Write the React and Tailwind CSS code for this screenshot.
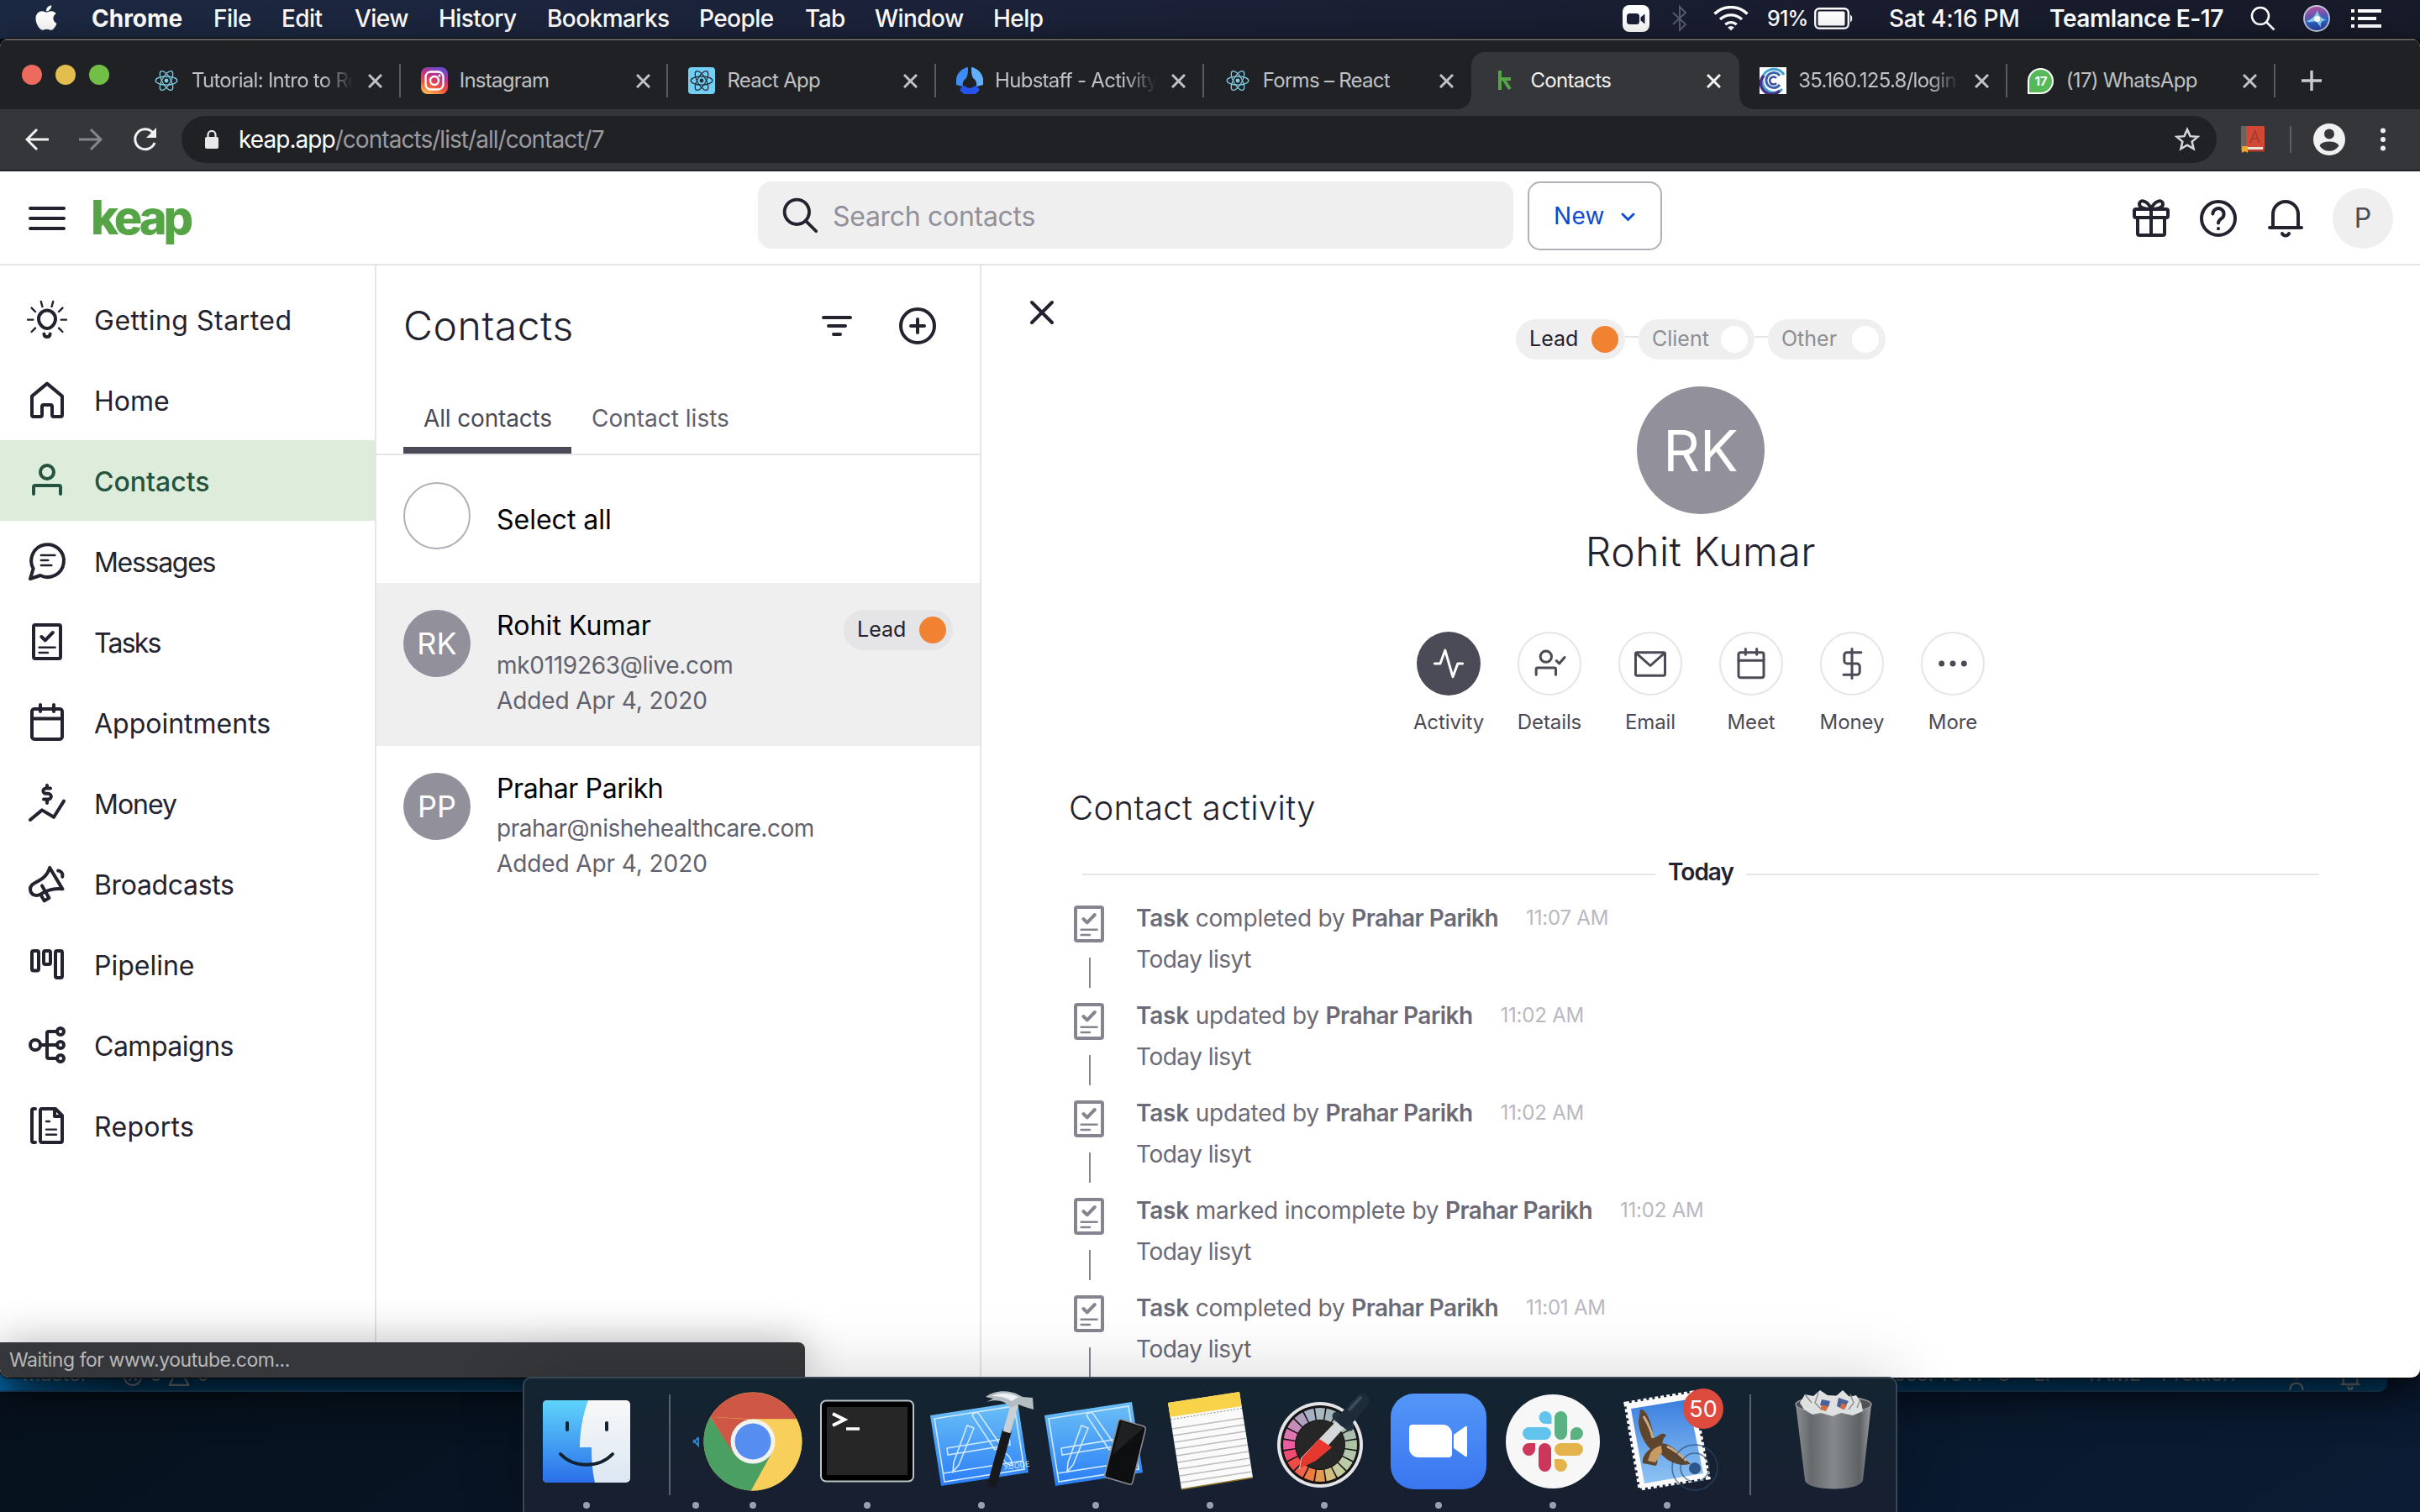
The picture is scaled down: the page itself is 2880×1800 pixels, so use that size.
import React from "react";
import { FaApple } from "react-icons/fa";

/* ---------- shared helpers ---------- */

function Ico({ size = 48, sw = 2, className = "", children }) {
  return (
    <svg
      width={size}
      height={size}
      viewBox="0 0 24 24"
      fill="none"
      stroke="currentColor"
      strokeWidth={sw}
      strokeLinecap="round"
      strokeLinejoin="round"
      className={"shrink-0 " + className}
    >
      {children}
    </svg>
  );
}

function ReactLogo({ color, size = 28 }) {
  return (
    <svg width={size} height={size} viewBox="-12 -12 24 24" fill="none" stroke={color} strokeWidth="1.1">
      <circle r="2.1" fill={color} stroke="none" />
      <ellipse rx="11" ry="4.3" />
      <ellipse rx="11" ry="4.3" transform="rotate(60)" />
      <ellipse rx="11" ry="4.3" transform="rotate(120)" />
    </svg>
  );
}

/* ---------- macOS menu bar ---------- */

const MENUS = [
  ["File", "w-[81px]"],
  ["Edit", "w-[87px]"],
  ["View", "w-[100px]"],
  ["History", "w-[129px]"],
  ["Bookmarks", "w-[181px]"],
  ["People", "w-[126px]"],
  ["Tab", "w-[83px]"],
  ["Window", "w-[141px]"],
  ["Help", "w-[80px]"],
];

function MenuBar() {
  return (
    <header className="flex h-[46px] items-center bg-gradient-to-r from-[#1c2942] via-[#1b2036] to-[#171a28] pb-[2px] text-[28px] font-medium leading-[44px] text-white">
      <div className="flex w-[109px] justify-start pl-[38px]">
        <FaApple size={34} className="mb-[3px]" />
      </div>
      <span className="w-[145px] font-bold">Chrome</span>
      {MENUS.map(([label, w]) => (
        <span key={label} className={"whitespace-nowrap tracking-[-0.02em] " + w}>
          {label}
        </span>
      ))}
      <div className="ml-auto flex items-center pr-[46px]">
        <svg width="32" height="32" viewBox="0 0 32 32" className="mr-[26px]">
          <rect width="32" height="32" rx="8" fill="#fff" />
          <rect x="5" y="10" width="15" height="13" rx="3.5" fill="#1b2036" />
          <path d="M21.500 14.500 26.500 10.500v12l-5-4z" fill="#1b2036" />
        </svg>
        <svg width="20" height="32" viewBox="0 0 20 32" fill="none" stroke="#565c6c" strokeWidth="2" className="mr-[30px]">
          <path d="M2 9 17 23 10 30V2l7 7L2 23" />
        </svg>
        <svg width="42" height="30" viewBox="0 0 42 30" fill="none" stroke="#fff" strokeWidth="3.400" className="mr-[22px]">
          <path d="M1.500 9.500a28 28 0 0 1 39 0M8 16a19 19 0 0 1 26 0M14.300 22.200a10 10 0 0 1 13.400 0" />
          <path d="m17 25.500 4 4 4-4a6 6 0 0 0-8 0z" fill="#fff" stroke="none" />
        </svg>
        <span className="w-[56px] text-[25px] tracking-[-0.03em]">91%</span>
        <svg width="48" height="26" viewBox="0 0 48 26" className="mr-[41px]">
          <rect x="1.200" y="1.200" width="39.600" height="23.600" rx="5" fill="none" stroke="#fff" strokeWidth="2.400" />
          <rect x="4.500" y="4.500" width="32" height="17" rx="1.500" fill="#fff" />
          <path d="M43 8.500c3 1 3 8 0 9z" fill="#fff" />
        </svg>
        <span className="w-[191px] whitespace-nowrap tracking-[-0.008em]">Sat 4:16 PM</span>
        <span className="w-[239px] whitespace-nowrap font-semibold tracking-[-0.015em]">Teamlance E-17</span>
        <svg width="30" height="30" viewBox="0 0 30 30" fill="none" stroke="#fff" strokeWidth="2.600" className="mr-[33px]">
          <circle cx="12" cy="12" r="10" />
          <path d="m19.500 19.500 9 9" />
        </svg>
        <svg width="32" height="32" viewBox="-16 -16 32 32" className="mr-[25px]">
          <defs>
            <linearGradient id="siri" x1="0.300" y1="0" x2="0.500" y2="1">
              <stop offset="0" stopColor="#c0529c" />
              <stop offset="0.400" stopColor="#6a55b5" />
              <stop offset="0.600" stopColor="#2f66c5" />
              <stop offset="1" stopColor="#2a3f9c" />
            </linearGradient>
          </defs>
          <circle r="15" fill="url(#siri)" stroke="#c4c8dc" strokeWidth="1.800" />
          <path d="M-12 3C-6 1-2-2 1-10c1 7 5 10 11 12C6 2 4 5 5 11 2 6 0 4-1 3-4 3-8 6-12 3z" fill="#8fe0f2" opacity=".9" />
          <circle cx=".5" cy=".5" r="3.500" fill="#fff" />
        </svg>
        <svg width="36" height="22" viewBox="0 0 36 22" fill="#fff">
          <path d="M0 0h4v4H0zM8 0h28v4H8zM0 9h4v4H0zM8 9h22v4H8zM0 18h4v4H0zM8 18h28v4H8z" />
        </svg>
      </div>
    </header>
  );
}

/* ---------- browser chrome ---------- */

function HubstaffIcon() {
  return (
    <svg width="34" height="34" viewBox="0 0 34 34">
      <path d="M15 1C8 2 2 8 1 15v7l8 2c-1-5 1-8 4-10 2-4 2-8 2-13z" fill="#3f8cf5" />
      <path d="M19 1c7 1 13 7 14 14v7l-8 2c1-5-1-8-4-10-2-4-2-8-2-13z" fill="#62b0fb" />
      <path d="M9 23c3 0 5 3 8 3s5-3 8-3l4 5-5 5H10l-5-5z" fill="#2453ee" />
    </svg>
  );
}

function InstagramIcon() {
  return (
    <svg width="32" height="32" viewBox="0 0 32 32">
      <defs>
        <linearGradient id="ig" x1="0.200" y1="1" x2="0.600" y2="0">
          <stop offset="0" stopColor="#fdc04f" />
          <stop offset="0.350" stopColor="#f0503c" />
          <stop offset="0.650" stopColor="#c9317f" />
          <stop offset="1" stopColor="#6a4bd0" />
        </linearGradient>
      </defs>
      <rect width="32" height="32" rx="8" fill="url(#ig)" />
      <g fill="none" stroke="#fff" strokeWidth="2.400">
        <rect x="5.500" y="5.500" width="21" height="21" rx="6" />
        <circle cx="16" cy="16" r="5" />
      </g>
      <circle cx="22" cy="10" r="1.500" fill="#fff" />
    </svg>
  );
}

function ReactAppIcon() {
  return (
    <span className="flex size-[32px] items-center justify-center rounded-[4px] bg-[#74cff5]">
      <ReactLogo color="#22303c" size={28} />
    </span>
  );
}

function KeapIcon() {
  return (
    <svg width="32" height="32" viewBox="0 0 32 32" fill="none" stroke="#55a546" strokeWidth="4">
      <path d="M10 4v23M10 14h13M14 14l8 12" />
    </svg>
  );
}

function SwirlIcon() {
  return (
    <svg width="32" height="32" viewBox="0 0 32 32" fill="none">
      <rect width="32" height="32" fill="#fff" />
      <path d="M27 26A14 14 0 1 1 29 9" stroke="#3da3d4" strokeWidth="3" />
      <path d="M24 28A13 13 0 0 1 5 10" stroke="#4a2f86" strokeWidth="3.500" />
      <path d="M24 21A9 9 0 1 1 24 10" stroke="#3c63b0" strokeWidth="3" />
      <path d="M20 19a4.500 4.500 0 1 1 0-6" stroke="#3a4aa0" strokeWidth="2.500" />
    </svg>
  );
}

function WhatsIcon() {
  return (
    <span className="flex size-[31px] items-center justify-center rounded-full rounded-bl-[8px] border-[2px] border-white bg-[#54b956] text-[15px] font-bold leading-none tracking-tight text-white">
      17
    </span>
  );
}

const TABS = [
  { icon: <ReactLogo color="#7fcbe0" />, title: "Tutorial: Intro to React", fade: true, sep: true },
  { icon: <InstagramIcon />, title: "Instagram", sep: true },
  { icon: <ReactAppIcon />, title: "React App", sep: true },
  { icon: <HubstaffIcon />, title: "Hubstaff - Activity", fade: true, sep: true },
  { icon: <ReactLogo color="#7fcbe0" />, title: "Forms – React" },
  { icon: <KeapIcon />, title: "Contacts", active: true },
  { icon: <SwirlIcon />, title: "35.160.125.8/login", fade: true, sep: true },
  { icon: <WhatsIcon />, title: "(17) WhatsApp", sep: true },
];

function Tab({ icon, title, fade, sep, active }) {
  return (
    <div
      className={
        "relative flex h-[68px] w-[318.7px] shrink-0 items-center pl-[22px] text-[24px] " +
        (active ? "rounded-t-[16px] bg-[#35363a] text-[#f1f1f2]" : "text-[#bfc1c4]")
      }
    >
      {active && (
        <>
          <span className="absolute bottom-0 left-[-16px] size-[16px] bg-[radial-gradient(circle_at_0_0,transparent_15.5px,#35363a_16px)]" />
          <span className="absolute bottom-0 right-[-16px] size-[16px] bg-[radial-gradient(circle_at_100%_0,transparent_15.5px,#35363a_16px)]" />
        </>
      )}
      <span className="flex w-[36px] justify-center">{icon}</span>
      <span
        className={
          "ml-[12px] w-[194px] overflow-hidden whitespace-nowrap tracking-[-0.03em] " +
          (fade ? "[mask-image:linear-gradient(90deg,#000_80%,transparent_99%)]" : "")
        }
      >
        {title}
      </span>
      <svg width="17" height="17" viewBox="0 0 17 17" stroke="currentColor" strokeWidth="3" className="ml-[16px]">
        <path d="m1 1 15 15M16 1 1 16" />
      </svg>
      {sep && <span className="ml-auto h-[40px] w-[2px] bg-[#5a5b5e]" />}
    </div>
  );
}

function TabStrip() {
  return (
    <div className="flex h-[84px] items-end border-t-[2px] border-[#5f605f] bg-[#202124]">
      <div className="flex h-[68px] w-[158px] items-center gap-[16px] pb-[14px] pl-[26px]">
        <span className="size-[24px] rounded-full bg-[#ed6a5e]" />
        <span className="size-[24px] rounded-full bg-[#e1be4d]" />
        <span className="size-[24px] rounded-full bg-[#71bf46]" />
      </div>
      {TABS.map((t) => (
        <Tab key={t.title} {...t} />
      ))}
      <div className="flex h-[68px] w-[86px] items-center justify-center">
        <svg width="24" height="24" viewBox="0 0 24 24" stroke="#c9cacc" strokeWidth="3.400">
          <path d="M12 0v24M0 12h24" />
        </svg>
      </div>
    </div>
  );
}

function Toolbar() {
  return (
    <div className="flex h-[74px] items-center border-b-[2px] border-[#232427] bg-[#35363a]">
      <svg width="28" height="28" viewBox="0 0 28 28" fill="none" stroke="#f1f1f2" strokeWidth="3" className="ml-[30px]">
        <path d="M14 2 2 14l12 12M2 14h26" />
      </svg>
      <svg width="28" height="28" viewBox="0 0 28 28" fill="none" stroke="#86878a" strokeWidth="3" className="ml-[36px]">
        <path d="m14 2 12 12-12 12M26 14H0" />
      </svg>
      <svg width="30" height="30" viewBox="0 0 30 30" fill="none" stroke="#f1f1f2" strokeWidth="3" className="ml-[36px]">
        <path d="M26 19A12 12 0 1 1 23.500 6.500" />
        <path d="M28 1v12H16z" fill="#f1f1f2" stroke="none" />
      </svg>
      <div className="ml-[28px] flex h-[56px] w-[2422px] items-center rounded-full bg-[#202124] pl-[28px] pr-[20px]">
        <svg width="16" height="22" viewBox="0 0 16 22">
          <rect y="8" width="16" height="14" rx="2" fill="#e8e8ea" />
          <path d="M3.500 9V5.500a4.500 4.500 0 0 1 9 0V9" fill="none" stroke="#e8e8ea" strokeWidth="2.200" />
        </svg>
        <span className="ml-[24px] whitespace-nowrap text-[28px] tracking-[-0.034em] text-[#9a9b9e]">
          <span className="text-white">keap.app</span>/contacts/list/all/contact/7
        </span>
        <svg width="30" height="30" viewBox="0 0 24 24" fill="none" stroke="#d5d6d8" strokeWidth="2" className="ml-auto">
          <path d="m12 2.500 2.800 6.400 7 .6-5.300 4.600 1.600 6.800L12 17.300l-6.100 3.600 1.600-6.800L2.200 9.500l7-.6z" />
        </svg>
      </div>
      <svg width="28" height="32" viewBox="0 0 28 32" className="ml-[29px]">
        <rect x="0" y="0" width="28" height="28" rx="1.500" fill="#d14836" />
        <rect x="0" y="0" width="6" height="28" fill="#6b6460" />
        <rect x="6" y="25" width="20" height="3" fill="#e9e4de" />
        <rect x="0" y="28" width="28" height="2.500" fill="#b8382a" />
        <path d="M1 24h7v8l-3.500-2L1 32z" fill="#e5a938" />
        <path d="m11 20 5.500-14L22 20M13 15h7" fill="none" stroke="#a83a2c" strokeWidth="2" />
      </svg>
      <span className="ml-[30px] h-[32px] w-[2px] bg-[#5f6063]" />
      <svg width="38" height="38" viewBox="0 0 38 38" className="ml-[26px]">
        <circle cx="19" cy="19" r="19" fill="#f1f1f2" />
        <circle cx="19" cy="12.500" r="6" fill="#35363a" />
        <path d="M7.500 26.500a12 7 0 0 1 23 0 13.600 13.600 0 0 1-23 0z" fill="#35363a" />
      </svg>
      <svg width="8" height="28" viewBox="0 0 8 28" fill="#f1f1f2" className="ml-[41px]">
        <circle cx="4" cy="3.500" r="3" />
        <circle cx="4" cy="14" r="3" />
        <circle cx="4" cy="24.500" r="3" />
      </svg>
    </div>
  );
}

/* ---------- Keap application ---------- */

function AppHeader() {
  return (
    <div className="flex h-[112px] shrink-0 items-center border-b-[2px] border-[#e5e5e6] text-[#23222f]">
      <div className="ml-[34px] mt-[1px] flex flex-col gap-[8px]">
        <span className="h-[4px] w-[44px] rounded-full bg-[#23222f]" />
        <span className="h-[4px] w-[44px] rounded-full bg-[#23222f]" />
        <span className="h-[4px] w-[44px] rounded-full bg-[#23222f]" />
      </div>
      <span className="ml-[30px] w-[794px] text-[56px] font-extrabold leading-[80px] tracking-[-0.075em] text-[#55a546]">
        keap
      </span>
      <div className="mb-[6px] flex h-[80px] w-[899px] items-center rounded-[16px] bg-[#efefef] pl-[28px]">
        <Ico size={44} sw={2.1}>
          <circle cx="10" cy="10" r="8" />
          <path d="m16 16 6.500 6.500" />
        </Ico>
        <span className="ml-[17px] pt-[3px] text-[32px] tracking-[-0.3px] text-[#92909b]">Search contacts</span>
      </div>
      <div className="mb-[5px] ml-[17px] flex h-[82px] w-[160px] items-center rounded-[15px] border-[2px] border-[#b1b0b8] pl-[29px] text-[28px] text-[#0b4bd0]">
        <span className="w-[80px] tracking-[0.3px]">New</span>
        <svg width="17" height="11" viewBox="0 0 17 11" fill="none" stroke="currentColor" strokeWidth="2.800" strokeLinecap="round" className="mt-[3px]">
          <path d="m2 2 6.500 6.500L15 2" />
        </svg>
      </div>
      <div className="ml-auto flex items-center pr-[32px] pt-[2px]">
        <Ico size={48} className="mr-[32px]">
          <rect x="2" y="6.500" width="20" height="5" rx="1" />
          <path d="M4 11.500V21a1 1 0 0 0 1 1h14a1 1 0 0 0 1-1v-9.500M12 6.500V22M12 6.500C10 1 5 .5 5 3.500c0 2 3 3 7 3 4 0 7-1 7-3 0-3-5-2.500-7 3" />
        </Ico>
        <Ico size={48} className="mr-[32px]">
          <circle cx="12" cy="12" r="10" />
          <path d="M8.700 9.200a3.300 3.300 0 1 1 5 3c-1.200.8-1.700 1.300-1.700 2.600M12 18v.1" />
        </Ico>
        <Ico size={48} className="mr-[32px]">
          <path d="M2.500 17.500h19M4.500 17V9.500a7.500 7.500 0 0 1 15 0V17M10 21a2.200 2.200 0 0 0 4 0" />
        </Ico>
        <span className="flex size-[72px] items-center justify-center rounded-full bg-[#efefef] text-[32px] text-[#4b4a57]">P</span>
      </div>
    </div>
  );
}

const TaskGlyph = (
  <>
    <rect x="4" y="2" width="16" height="20" rx="1" />
    <path d="m8.700 9 2.200 2.200 4.500-4.700" />
    <path d="M7.300 15.400h9.500M7.300 18.500h5.200" strokeWidth="1.200" />
  </>
);

const CalendarGlyph = (
  <>
    <rect x="3" y="4" width="18" height="18" rx="1.500" />
    <path d="M3 9.700h18M8 1.500v4M16 1.500v4" />
  </>
);

const NAV = [
  {
    label: "Getting Started",
    track: "tracking-[0.5px]",
    glyph: (
      <>
        <path d="M9.600 16.700c-1.600-1.200-2.600-2.900-2.600-4.900a5 5 0 0 1 10 0c0 2-1 3.700-2.600 4.900-1.400 1-3.400 1-4.800 0z" />
        <path d="M10.200 20.800c.2 2.300 3.400 2.300 3.600 0" />
        <path
          d="M.5 12.300h3.200M20.300 12.300h3.200M8.400 1.500l.8 3M15.600 1.500l-.8 3M2.800 5.300 5 7.500M21.200 5.300 19 7.500M5 17.300l-2.200 2.200M19 17.300l2.200 2.200"
          strokeWidth="1.200"
        />
      </>
    ),
  },
  {
    label: "Home",
    track: "",
    glyph: (
      <path d="M12 2.300 3 9.800V21a1 1 0 0 0 1 1h4a1 1 0 0 0 1-1v-5a1 1 0 0 1 1-1h4a1 1 0 0 1 1 1v5a1 1 0 0 0 1 1h4a1 1 0 0 0 1-1V9.800z" />
    ),
  },
  {
    label: "Contacts",
    track: "",
    active: true,
    glyph: (
      <>
        <circle cx="12" cy="7" r="4" />
        <path d="M4 20v-4a1 1 0 0 1 1-1h14a1 1 0 0 1 1 1v4" />
      </>
    ),
  },
  {
    label: "Messages",
    track: "tracking-[-1.3px]",
    glyph: (
      <>
        <path d="M3.800 16.500A9.700 9.700 0 1 1 8 20.500L2 22.500z" />
        <path d="M8.400 8.500h8.300M8.400 11.500h4.300M8.400 14.500h6.300" strokeWidth="1.200" />
      </>
    ),
  },
  { label: "Tasks", track: "tracking-[-1.8px]", glyph: TaskGlyph },
  { label: "Appointments", track: "", glyph: CalendarGlyph },
  {
    label: "Money",
    track: "tracking-[-1px]",
    glyph: (
      <path d="m2 22 7-5.800 7 4.200 6-9.600M14 3.200h-2.700a1.400 1.400 0 0 0 0 3.200h1.400a1.400 1.400 0 0 1 0 3.400H10M12 1.500v1.700M12 9.800v2.200" />
    ),
  },
  {
    label: "Broadcasts",
    track: "tracking-[-0.35px]",
    glyph: (
      <>
        <path d="M13.600 2.500 21.200 15.200C16.500 14.400 13 15.200 8.200 18.200 5.800 19.600 3.200 19 2.300 16.700c-.8-2.200.2-4 2.300-5.100C9.400 9.200 12.300 7 13.600 2.500z" />
        <path d="m9 13.200 4.200 7.300-2.800 1.700-2.200-3.700M18.600 4.300c1.900.1 3 1.800 2.500 3.600" />
      </>
    ),
  },
  {
    label: "Pipeline",
    track: "",
    glyph: (
      <>
        <rect x="3" y="4" width="4" height="11.800" rx="1" />
        <rect x="10" y="4" width="4" height="8" rx="1" />
        <rect x="17" y="4" width="4" height="16" rx="1" />
      </>
    ),
  },
  {
    label: "Campaigns",
    track: "tracking-[-0.5px]",
    glyph: (
      <>
        <circle cx="5" cy="12" r="3" />
        <circle cx="20" cy="4" r="2" />
        <circle cx="20" cy="12" r="2" />
        <circle cx="20" cy="20" r="2" />
        <path d="M8 12h10M18 4h-5a1 1 0 0 0-1 1v14a1 1 0 0 0 1 1h5" />
      </>
    ),
  },
  {
    label: "Reports",
    track: "tracking-[0.3px]",
    glyph: (
      <>
        <path d="M5 2H4a1 1 0 0 0-1 1v18a1 1 0 0 0 1 1h1" />
        <path d="M8 3a1 1 0 0 1 1-1h8l4 4v15a1 1 0 0 1-1 1H9a1 1 0 0 1-1-1z" />
        <path d="M16.500 2.500v4h4" />
        <path d="M11.500 9.500h2M11.500 14.300h6M11.500 17.400h6" strokeWidth="1.200" />
      </>
    ),
  },
];

function Sidebar() {
  return (
    <nav className="w-[448px] shrink-0 border-r-[2px] border-[#e5e5e6] pt-[16px]">
      {NAV.map((n) => (
        <div
          key={n.label}
          className={
            "flex h-[96px] items-center gap-[32px] pl-[32px] text-[32px] " +
            (n.active ? "bg-[#deeddb] font-medium text-[#24533f]" : "text-[#23222f]")
          }
        >
          <Ico>{n.glyph}</Ico>
          <span className={"whitespace-nowrap pt-[3px] " + n.track}>{n.label}</span>
        </div>
      ))}
    </nav>
  );
}

function ContactRow({ initials, name, nameTrack, email, emailTrack, selected }) {
  return (
    <div className={"flex h-[194px] pl-[32px] pr-[32px] " + (selected ? "bg-[#efefef]" : "")}>
      <span className="mt-[32px] flex size-[80px] shrink-0 items-center justify-center rounded-full bg-[#92909b] text-[36px] text-white">
        {initials}
      </span>
      <div className="ml-[31px] flex-1 pt-[27px] text-[28px] leading-[42px] text-[#62616d]">
        <div className={"mb-[2px] whitespace-nowrap text-[32px] leading-[48px] text-black " + nameTrack}>{name}</div>
        <div className={"whitespace-nowrap " + emailTrack}>{email}</div>
        <div className="whitespace-nowrap tracking-[-0.1px]">Added Apr 4, 2020</div>
      </div>
      {selected && (
        <span className="mt-[32px] flex h-[48px] w-[130px] items-center justify-between rounded-full bg-[#e5e5e8] pl-[16px] pr-[8px] text-[25px] text-[#23222f]">
          Lead
          <span className="size-[32px] rounded-full bg-[#f08232]" />
        </span>
      )}
    </div>
  );
}

function ContactsPanel() {
  return (
    <section className="w-[720px] shrink-0 border-r-[2px] border-[#e5e5e6]">
      <div className="flex h-[142px] items-center pl-[32px] pt-[2px] text-[#23222f]">
        <h1 className="w-[498px] text-[48px] font-light tracking-[0.6px]">Contacts</h1>
        <svg width="36" height="26" viewBox="0 0 36 26" stroke="currentColor" strokeWidth="4" strokeLinecap="round">
          <path d="M2 3h32M8 13h20M14 23h8" />
        </svg>
        <Ico size={48} className="ml-[54px]">
          <circle cx="12" cy="12" r="10" />
          <path d="M12 8v8M8 12h8" />
        </Ico>
      </div>
      <div className="flex h-[84px] border-b-[2px] border-[#e5e5e6] pl-[32px] pt-[4px] text-[28px] leading-[72px]">
        <span className="w-[200px] whitespace-nowrap border-b-[8px] border-[#4b4a57] pl-[24px] tracking-[-0.15px] text-[#4b4a57]">
          All contacts
        </span>
        <span className="whitespace-nowrap pl-[24px] text-[#62616d]">Contact lists</span>
      </div>
      <div className="flex h-[152px] pl-[32px] pt-[32px]">
        <span className="size-[80px] rounded-full border-[2px] border-[#b1b0b8]" />
        <span className="ml-[31px] text-[32px] leading-[90px] text-black">Select all</span>
      </div>
      <ContactRow
        initials="RK"
        name="Rohit Kumar"
        nameTrack="tracking-[0.1px]"
        email="mk0119263@live.com"
        emailTrack="tracking-[-0.3px]"
        selected
      />
      <ContactRow
        initials="PP"
        name="Prahar Parikh"
        nameTrack="tracking-[-0.4px]"
        email="prahar@nishehealthcare.com"
        emailTrack="tracking-[-0.46px]"
      />
    </section>
  );
}

const STAGES = [
  ["Lead", "w-[130px]", "text-[#23222f]", "bg-[#f08232]"],
  ["Client", "w-[138px]", "text-[#8d8d92]", "bg-white"],
  ["Other", "w-[140px]", "text-[#8d8d92]", "bg-white"],
];

const ACTIONS = [
  { label: "Activity", active: true, glyph: <path d="M2 12h4L9.500 2.500l5.500 19L18.500 12H22" /> },
  {
    label: "Details",
    glyph: (
      <>
        <circle cx="9.500" cy="7" r="4" />
        <path d="M2.500 20v-4a1 1 0 0 1 1-1h12a1 1 0 0 1 1 1v4M17 10l2 2 3.800-4.500" />
      </>
    ),
  },
  {
    label: "Email",
    glyph: (
      <>
        <rect x="1.500" y="4" width="21" height="16.500" rx="1" />
        <path d="m2.500 5 9.500 8.500L21.500 5" />
      </>
    ),
  },
  { label: "Meet", glyph: CalendarGlyph },
  { label: "Money", glyph: <path d="M18.500 4H8.500a2 2 0 0 0-2 2v4a2 2 0 0 0 2 2h7a2 2 0 0 1 2 2v4a2 2 0 0 1-2 2H6M12 1.500v21" /> },
  {
    label: "More",
    glyph: (
      <g fill="currentColor" stroke="none">
        <circle cx="4" cy="12" r="2.100" />
        <circle cx="12" cy="12" r="2.100" />
        <circle cx="20" cy="12" r="2.100" />
      </g>
    ),
  },
];

const EVENTS = [
  ["completed by", "11:07 AM"],
  ["updated by", "11:02 AM"],
  ["updated by", "11:02 AM"],
  ["marked incomplete by", "11:02 AM"],
  ["completed by", "11:01 AM"],
];

function ContactDetail() {
  return (
    <section className="relative flex flex-1 flex-col overflow-hidden">
      <svg
        width="32"
        height="32"
        viewBox="0 0 32 32"
        stroke="#23222f"
        strokeWidth="4"
        strokeLinecap="round"
        className="absolute left-[56px] top-[40px]"
      >
        <path d="m4 4 24 24M28 4 4 28" />
      </svg>
      <div className="flex flex-col items-center pt-[64px]">
        <div className="flex h-[48px] items-center">
          {STAGES.map(([label, w, fg, dot], i) => (
            <React.Fragment key={label}>
              {i > 0 && <span className="mb-[6px] h-[2px] w-[16px] bg-[#e5e5e6]" />}
              <span className={"flex h-[48px] items-center justify-between rounded-full bg-[#efefef] pl-[16px] pr-[8px] text-[25px] " + w + " " + fg}>
                {label}
                <span className={"size-[32px] rounded-full " + dot} />
              </span>
            </React.Fragment>
          ))}
        </div>
        <span className="mt-[32px] flex size-[152px] items-center justify-center rounded-full bg-[#92909b] text-[68px] leading-none text-white">RK</span>
        <h2 className="mt-[17px] whitespace-nowrap text-[48px] font-light leading-[56px] tracking-[0.5px] text-[#23222f]">Rohit Kumar</h2>
        <div className="mt-[67px] flex">
          {ACTIONS.map((a) => (
            <div key={a.label} className="flex w-[120px] flex-col items-center">
              <span
                className={
                  "flex size-[76px] items-center justify-center rounded-full " +
                  (a.active ? "bg-[#4b4a57] text-white" : "border-[2px] border-[#e5e5e6] text-[#4b4a57]")
                }
              >
                <Ico size={40} sw={1.8}>{a.glyph}</Ico>
              </span>
              <span className="mt-[16px] whitespace-nowrap text-[24px] leading-[32px] tracking-[-0.1px] text-[#4b4a57]">{a.label}</span>
            </div>
          ))}
        </div>
      </div>
      <div className="pl-[104px] pr-[120px]">
        <h3 className="mt-[62px] text-[40px] font-light leading-[48px] tracking-[0.35px] text-[#23222f]">Contact activity</h3>
        <div className="ml-[16px] mt-[32px] flex h-[40px] items-center">
          <span className="mt-[6px] h-[2px] flex-1 bg-[#e5e5e6]" />
          <span className="w-[108px] text-center text-[28px] font-semibold tracking-[-1px] text-[#23222f]">Today</span>
          <span className="mt-[6px] h-[2px] flex-1 bg-[#e5e5e6]" />
        </div>
        <div className="pt-[13px]">
          {EVENTS.map(([verb, time], i) => (
            <div key={i} className="flex h-[116px]">
              <div className="flex w-[80px] flex-col pt-[5px] text-[#86848f]">
                <Ico size={48}>{TaskGlyph}</Ico>
                <span className="ml-[24px] mt-[16px] h-[36px] w-[2px] bg-[#86848f]" />
              </div>
              <div className="pt-[2px] text-[28px] leading-[40px] tracking-[-0.2px] text-[#6b6a76]">
                <div className="flex items-center whitespace-nowrap">
                  <span>
                    <b className="font-semibold">Task</b> {verb} <b className="font-semibold tracking-[-0.55px]">Prahar Parikh</b>
                  </span>
                  <span className="ml-[33px] text-[24px] text-[#b9b8c1]">{time}</span>
                </div>
                <div className="mt-[9px] tracking-[-0.5px]">Today lisyt</div>
              </div>
            </div>
          ))}
        </div>
      </div>
    </section>
  );
}

function BrowserWindow() {
  return (
    <div className="relative z-10 flex h-[1594px] flex-col overflow-hidden rounded-[10px] bg-white shadow-[0_0_0_1px_#000,0_20px_50px_rgba(0,0,0,0.8)]">
      <TabStrip />
      <Toolbar />
      <AppHeader />
      <div className="flex min-h-0 flex-1 text-[#23222f]">
        <Sidebar />
        <ContactsPanel />
        <ContactDetail />
      </div>
      <div className="absolute bottom-0 left-0 flex h-[42px] w-[958px] items-center rounded-tr-[8px] bg-[#36373a] pl-[11px] pt-[1px] text-[23px] tracking-[-0.45px] text-[#b8b8ba] shadow-[0_0_50px_rgba(0,0,0,0.3)]">
        Waiting for www.youtube.com...
      </div>
    </div>
  );
}

/* ---------- editor window peeking out behind the browser ---------- */

function EditorStatusBar() {
  return (
    <div className="absolute left-0 top-[1612px] flex h-[45px] w-[2841px] items-center justify-between rounded-br-[10px] border-b-[2px] border-[#1c4a70] bg-gradient-to-r from-[#0070b8] via-[#003f69] via-[5%] to-[#004a7c] pl-[27px] pr-[30px] pt-[4px] text-[24px] text-[#8b8f94]">
      <div className="flex items-center">
        <span className="w-[119px]">master</span>
        <Ico size={24} className="mt-[6px]">
          <circle cx="12" cy="12" r="10" />
          <path d="m8 8 8 8M16 8l-8 8" />
        </Ico>
        <span className="ml-[8px] w-[22px]">0</span>
        <Ico size={26} className="mt-[4px]">
          <path d="M12 3 1.500 22h21z" />
        </Ico>
        <span className="ml-[8px]">0</span>
      </div>
      <div className="flex items-center">
        <span className="w-[109px]">Spaces: 1</span>
        <span className="w-[101px]">UTF-8</span>
        <span className="w-[61px]">LF</span>
        <span className="w-[91px]">YAML</span>
        <span className="w-[148px] whitespace-nowrap">Prettier: ✓</span>
        <Ico size={26} className="mt-[12px]">
          <circle cx="12" cy="6" r="5" />
          <path d="M5 23c0-9 14-9 14 0" />
        </Ico>
        <Ico size={28} className="ml-[37px] mt-[10px]">
          <path d="M3 18h18M5 18V9a7 7 0 0 1 14 0v9M10 21a2 2 0 0 0 4 0" />
        </Ico>
      </div>
    </div>
  );
}

/* ---------- dock (icons are drawn around their own centre) ---------- */

function FinderArt() {
  return (
    <>
      <defs>
        <linearGradient id="fdL" x1="0" y1="0" x2="0" y2="1">
          <stop offset="0" stopColor="#5fd4fb" />
          <stop offset="1" stopColor="#2b6feb" />
        </linearGradient>
        <linearGradient id="fdR" x1="0" y1="0" x2="0" y2="1">
          <stop offset="0" stopColor="#f8f8f8" />
          <stop offset="1" stopColor="#dce7f3" />
        </linearGradient>
      </defs>
      <rect x="-52" y="-49" width="104" height="98" rx="5" fill="url(#fdR)" />
      <path d="M-47-49H2C-5-30-8-10-8 7H6c0 16 1 28 4 42h-57a5 5 0 0 1-5-5v-88a5 5 0 0 1 5-5z" fill="url(#fdL)" />
      <g fill="none" stroke="#12222f" strokeWidth="4" strokeLinecap="round">
        <path d="M-23-22v8M24-22v8" />
        <path d="M-31 15c16 17 46 17 62 0" />
      </g>
    </>
  );
}

function ChromeArt() {
  return (
    <>
      <circle r="58.500" fill="#f9cf5c" />
      <path d="M-50.700-29.200A58.500 58.500 0 0 1 52-26.500H0z" fill="#cf5745" />
      <path d="M-50.700-29.200A58.500 58.500 0 0 0-2 58.500L23 13.200-23 13z" fill="#4a9f63" />
      <path d="M-50.700-29.200-23 14 0-26z" fill="#cf5745" />
      <path d="M23 13-2 58.500A58.500 58.500 0 0 0 52-26.500H0z" fill="#f9cf5c" />
      <circle r="26.500" fill="#f2f2f2" />
      <circle r="21.500" fill="#568df0" />
    </>
  );
}

function TerminalArt() {
  return (
    <>
      <rect x="-55" y="-48.500" width="110" height="96" rx="6" fill="#000" stroke="#b9c4c8" strokeWidth="2" />
      <rect x="-48" y="-41" width="96" height="81" fill="#262626" />
      <path d="m-41-33 14 7-14 7" fill="none" stroke="#fff" strokeWidth="4" />
      <path d="M-25-15h16" stroke="#fff" strokeWidth="3.500" />
    </>
  );
}

function Blueprint() {
  return (
    <>
      <defs>
        <linearGradient id="bp" x1="0" y1="0" x2="0" y2="1">
          <stop offset="0" stopColor="#6cc1f6" />
          <stop offset="1" stopColor="#2a7df6" />
        </linearGradient>
      </defs>
      <path d="M-61-31 43-47 56 37-48 53z" fill="url(#bp)" />
      <g fill="none" stroke="#cfe9ff" strokeWidth="1.600">
        <path d="M-56-27 39-42 51 33-44 48zM-46 38 50 23" />
        <path d="m-41 8 74-12 1 8-74 12z" />
        <path d="M-11-31a5 5 0 0 1 8-2L24 6l-8 4z" />
        <path d="m-17-19 8 3-18 44-7 8 1-11z" />
      </g>
    </>
  );
}

function XcodeArt() {
  return (
    <>
      <Blueprint />
      <path d="M24 12c10 4 12 10 13 17-8-2-12-6-13-17z" fill="none" stroke="#cfe9ff" strokeWidth="1.500" />
      <text x="27" y="34" fontSize="9" fill="#cfe9ff" transform="rotate(-8 27 34)">XCODE</text>
      <path d="M30-11 13 50" stroke="#17191c" strokeWidth="11" strokeLinecap="round" />
      <path d="M40-46 30-11" stroke="#c9d0d5" strokeWidth="9" />
      <path d="M5-53c10-8 28-9 40-2l4 2 12 1 1 14-10-3-8-3-10 4c-4-8-16-11-28-7l8-4z" fill="#b5bdc3" />
      <path d="M12-54c10-5 22-4 32 1l-8 5c-6-4-14-6-24-6z" fill="#eef1f3" />
    </>
  );
}

function SimulatorArt() {
  return (
    <>
      <Blueprint />
      <path d="M31-26 57-18q3 1 2 5L44 48q-1 4-4 3L13 43q-3-1-2-4L27-24q1-3 4-2z" fill="#0e0f11" stroke="#8b8f94" strokeWidth="1.500" />
      <path d="M31-24 57-16 20 16z" fill="#1f2022" />
    </>
  );
}

function NotesArt() {
  return (
    <>
      <path d="M-50-46 35-59 51 43-34 57z" fill="#fafafa" />
      <path d="M-50-46 35-59 37.600-42-47.400-29z" fill="#f8d34a" />
      <path d="M-47-26 38-39.500" stroke="#8e8a7c" strokeWidth="1" strokeDasharray="2 2" />
      <path
        d="M-45-15 40-28M-44-7 41-20M-43 1 42-12M-41 9 44-4M-40 17 45 4M-39 25 46 12M-38 33 47 20M-36 41 48 28M-35 49 50 36"
        stroke="#bcbcbc"
        strokeWidth="1.400"
      />
      <path d="m-34 57 85-14" stroke="#8a7326" strokeWidth="1.500" />
    </>
  );
}

const WHEEL = [
  "#a8b8c0", "#a3b5b8", "#a5b9b2", "#a8bba9", "#aabfae", "#aec2a6", "#b4c7ac", "#bccaa5", "#c4cb9d", "#d3bd7c",
  "#e29a52", "#ee7a42", "#f0604a", "#ef4a44", "#ef4a74", "#ee5ba0", "#dd76b0", "#c68cb8", "#b1a0c0", "#aab0c4",
];

function ColorMeterArt() {
  return (
    <>
      <circle cx="-5" cy="4" r="51" fill="#e4e4e6" />
      <circle cx="-5" cy="4" r="47" fill="#151515" />
      {WHEEL.map((c, i) => (
        <path key={i} d="M-11-39.600a44 44 0 0 1 12 0L-1-25.700a30 30 0 0 0-8 0z" fill={c} transform={`rotate(${i * 18} -5 4)`} />
      ))}
      <circle cx="-5" cy="4" r="29" fill="#262626" />
      <path d="m16-26 10 7-36 40-20 12 2-13z" fill="#d5d8da" />
      <path d="M-6-3 9 7l-19 16-19 9 2-12z" fill="#e5392f" />
      <path d="m15-30 15 12" stroke="#24313f" strokeWidth="11" strokeLinecap="round" />
      <path d="M25-26 45-48" stroke="#1e2b39" strokeWidth="18" strokeLinecap="round" />
      <path d="M30-38 43-52" stroke="#3b4b5c" strokeWidth="4" strokeLinecap="round" />
    </>
  );
}

function ZoomArt() {
  return (
    <>
      <defs>
        <linearGradient id="zm" x1="0" y1="0" x2="0" y2="1">
          <stop offset="0" stopColor="#5496f8" />
          <stop offset="1" stopColor="#3a76f0" />
        </linearGradient>
      </defs>
      <rect x="-57" y="-57" width="114" height="114" rx="28" fill="url(#zm)" />
      <path d="M-35-16a4 4 0 0 1 4-4H5a11 11 0 0 1 11 11v24a4 4 0 0 1-4 4h-36a11 11 0 0 1-11-11zM18-8 32-18q2-1 2 1v34q0 2-2 1L18 8z" fill="#fff" />
    </>
  );
}

function SlackArt() {
  return (
    <>
      <circle r="56" fill="#f7f7f7" />
      <path d="M-1.500-21h-7.500a7.500 7.500 0 1 1 7.500-7.500z" fill="#62c3ec" />
      <rect x="-36" y="-17" width="34" height="15" rx="7.500" fill="#62c3ec" />
      <rect x="2" y="-36" width="15" height="34" rx="7.500" fill="#5ab283" />
      <path d="M21-2v-7.500A7.500 7.500 0 1 1 28.500-2z" fill="#5ab283" />
      <rect x="2" y="2" width="34" height="15" rx="7.500" fill="#e4b34c" />
      <path d="M2 21h7.500A7.500 7.500 0 1 1 2 28.500z" fill="#e4b34c" />
      <rect x="-17" y="2" width="15" height="34" rx="7.500" fill="#ce375c" />
      <path d="M-21 2v7.500A7.500 7.500 0 1 1-28.500 2z" fill="#ce375c" />
    </>
  );
}

function MailArt() {
  return (
    <>
      <defs>
        <linearGradient id="ml" x1="0" y1="0" x2="0" y2="1">
          <stop offset="0" stopColor="#3a7fe0" />
          <stop offset="1" stopColor="#8fc4f2" />
        </linearGradient>
      </defs>
      <path d="M-49-45 30-58 49 43-32 56z" fill="#fafafa" stroke="#fafafa" strokeWidth="5" strokeDasharray="4 3" />
      <path d="M-43-39 25-50 43 38-27 50z" fill="url(#ml)" />
      <path
        d="M-32-38c4 0 7 3 9 8 4 8 6 17 7 26l6-3c3-3 7-3 9 0l-3 3-2 6c9 1 18 8 25 16l9 9-9 1c-11-1-20-6-26-13l-5 4c1 6 0 9-2 10l-9-2-6-1c-1-6 3-13 9-17-8-8-14-22-14-33z"
        fill="#5f452c"
      />
      <path d="M-28-30c5 8 9 16 11 26M0 6c9 4 16 10 23 17" stroke="#c9ad86" strokeWidth="3" fill="none" />
      <path d="M-20 14c3-5 8-8 13-9l1 8-8 12-9-2z" fill="#c79a62" />
      <g fill="none" stroke="#2c4a70" strokeOpacity=".7" strokeWidth="1.500">
        <circle cx="33" cy="31" r="27" />
        <circle cx="33" cy="31" r="17" />
      </g>
      <circle cx="33" cy="32" r="7" fill="#2f578c" />
      <circle cx="43" cy="-39" r="24" fill="#dd4b3e" />
      <text x="43" y="-29.500" textAnchor="middle" fontSize="27" fill="#fff">50</text>
    </>
  );
}

function TrashArt() {
  return (
    <>
      <defs>
        <linearGradient id="tr" x1="0" y1="0" x2="1" y2="0">
          <stop offset="0" stopColor="#8a8e90" />
          <stop offset="0.200" stopColor="#666a6c" />
          <stop offset="0.500" stopColor="#85898b" />
          <stop offset="0.850" stopColor="#5e6264" />
          <stop offset="1" stopColor="#9a9ea0" />
        </linearGradient>
      </defs>
      <path d="M-45-44 C-45-30 45-30 45-44L35 46C33 60-32 60-34 46z" fill="url(#tr)" />
      <ellipse cy="-44" rx="45" ry="10" fill="#4d5153" stroke="#9a9ea0" strokeWidth="1.500" />
      <path d="m-40-46 6-10 10 2 8-7 9 6 10 1 8-7 8 8 8-2 6 9 2 10-12 5-14-3-10 4-14-4-10 2-10-6z" fill="#dfe0e0" />
      <path d="m-14-50 10 2-2 7-10-2zM6-52l12 4-6 10-8-4z" fill="#4a5f9c" />
      <path d="m-14-43 8 1-3 6-7-2zM10-46l6 3-3 5-5-2z" fill="#d46a3e" />
      <path d="M-34-56l8 10M-18-58l-4 12 8 8M20-56l4 10-6 8M32-50l-4 10" stroke="#8d8f90" strokeWidth="1.500" fill="none" />
    </>
  );
}

function DockItem({ art, w = "w-[136px]", dot = true }) {
  return (
    <div className={"flex shrink-0 flex-col items-center pt-[5px] " + w}>
      <svg width="136" height="140" viewBox="-68 -70 136 140" className="shrink-0 overflow-visible">
        {art}
      </svg>
      {dot && <span className="mt-[2px] size-[8px] rounded-full bg-[#9aa0b2]" />}
    </div>
  );
}

function Separator({ w }) {
  return (
    <div className={"flex shrink-0 justify-center pt-[19px] " + w}>
      <span className="h-[120px] w-[2px] bg-[#5a6471]" />
    </div>
  );
}

function Dock() {
  return (
    <div className="absolute left-[622px] top-[1639px] z-20 flex h-[163px] w-[1636px] overflow-hidden rounded-t-[10px] border-x-[2px] border-t-[2px] border-[#3a4653] bg-gradient-to-b from-[#132431] to-[#181f30] shadow-[0_0_80px_rgba(0,0,0,0.18)]">
      <DockItem art={<FinderArt />} w="w-[148px]" />
      <Separator w="w-[50px]" />
      <DockItem
        w="w-[12px]"
        art={<path d="M3-5v10l-6-7M3-5l-6 7" fill="none" stroke="#2f8fdc" strokeWidth="1.800" />}
      />
      <DockItem art={<ChromeArt />} w="w-[124px] mr-[6px]" />
      <DockItem art={<TerminalArt />} />
      <DockItem art={<XcodeArt />} />
      <DockItem art={<SimulatorArt />} />
      <DockItem art={<NotesArt />} />
      <DockItem art={<ColorMeterArt />} />
      <DockItem art={<ZoomArt />} />
      <DockItem art={<SlackArt />} />
      <DockItem art={<MailArt />} />
      <Separator w="w-[62px]" />
      <DockItem art={<TrashArt />} dot={false} />
    </div>
  );
}

export default function App() {
  return (
    <div className="relative h-[1800px] w-[2880px] overflow-hidden bg-gradient-to-br from-[#060a14] via-[#07121f] to-[#0a1b33] font-['Inter',sans-serif] antialiased">
      <MenuBar />
      <EditorStatusBar />
      <BrowserWindow />
      <Dock />
    </div>
  );
}
